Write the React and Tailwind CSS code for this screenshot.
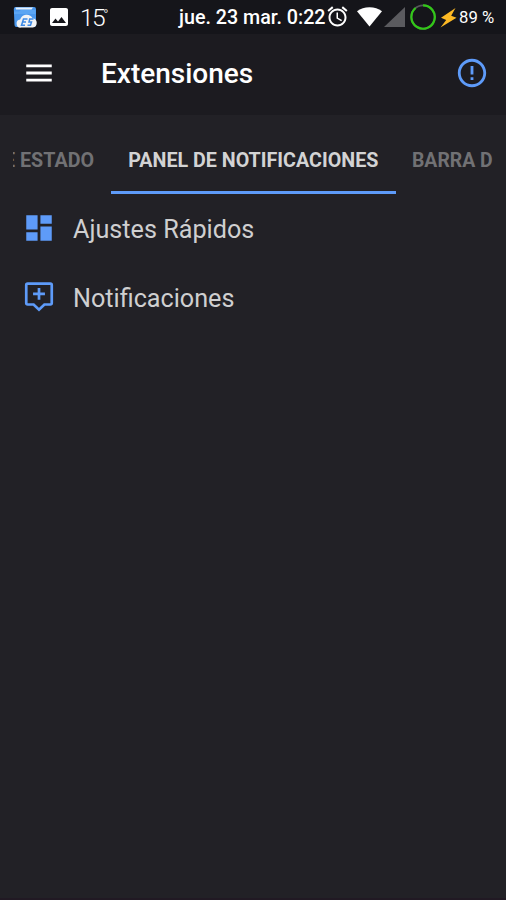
import React from "react";

function StatusBar() {
  return (
    <div className="flex h-[34px] items-center bg-[#15151a] text-white">
      <svg className="ml-[13px] shrink-0" width="24" height="24" viewBox="0 0 24 24">
        <path d="M3 2h18a2 2 0 0 1 2 2v16a2 2 0 0 1-2 2H3.500a2 2 0 0 1-2-2L.8 4a2 2 0 0 1 2.200-2z" fill="#4a97ec" />
        <path d="M2.500 2.500h17.500l-1.500 2H3z" fill="#e8f1fb" />
        <path d="M1 6.500h5l2-1.500h14.500v4H1z" fill="#5ba5f3" />
        <path d="M8 22.600a4 4 0 0 1-.8-8 6.700 6.700 0 0 1 12.400-1.300 4.700 4.700 0 0 1 .2 9.300z" fill="#f1f3f6" />
        <g fill="none" stroke="#3d8ae6" strokeWidth="1.500">
          <path d="M14.500 14h-4l-2 6.300h3.500M9.500 17h3.500M20.500 14h-3.800l-.7 3h2.500l-1 3.300h-3" />
        </g>
      </svg>
      <svg className="ml-[13px] shrink-0" width="18" height="18" viewBox="3 3 18 18">
        <path
          d="M21 19V5c0-1.100-.9-2-2-2H5c-1.100 0-2 .9-2 2v14c0 1.100.9 2 2 2h14c1.100 0 2-.9 2-2zM8.500 13.500l2.500 3.010L14.500 12l4.500 6H5l3.500-4.500z"
          fill="#fff"
        />
      </svg>
      <span className="mt-[2px] ml-[12px] flex w-[25px] shrink-0 whitespace-nowrap text-[24.500px] font-light leading-[34px] tracking-[-1.500px]">
        15<span className="-mt-[3px] -ml-[1px] text-[14px]">°</span>
      </span>
      <span className="mt-[2px] ml-[74px] w-[147px] shrink-0 whitespace-nowrap text-[19.700px] font-medium leading-[34px]">
        jue. 23 mar. 0:22
      </span>
      <svg className="shrink-0" width="23" height="22" viewBox="1 1.500 22 22">
        <path
          d="M22 5.720l-4.600-3.860-1.290 1.530 4.600 3.860L22 5.720zM7.880 3.390L6.600 1.860 2 5.710l1.290 1.530 4.590-3.850zM12.500 8H11v6l4.750 2.850.75-1.230-4-2.370V8zM12 4c-4.970 0-9 4.030-9 9s4.020 9 9 9c4.970 0 9-4.030 9-9s-4.030-9-9-9zm0 16c-3.870 0-7-3.130-7-7s3.130-7 7-7 7 3.130 7 7-3.130 7-7 7z"
          fill="#fff"
        />
      </svg>
      <svg className="ml-[8px] shrink-0" width="25" height="20" viewBox="0 0 25 20">
        <path d="M12.500 19.500L0 4.200Q5.300.2 12.500.2T25 4.200z" fill="#fff" />
      </svg>
      <svg className="ml-[2px] shrink-0" width="21" height="20" viewBox="0 0 21 20">
        <path d="M21 0v20H0z" fill="#5b5b5f" />
      </svg>
      <svg className="ml-[5px] shrink-0" width="26" height="26" viewBox="0 0 26 26">
        <circle cx="13" cy="13" r="11.700" fill="none" stroke="#55555a" strokeWidth="1.800" />
        <path d="M13 1.300A11.700 11.700 0 1 1 5.600 4" fill="none" stroke="#32c718" strokeWidth="2.200" />
      </svg>
      <svg className="ml-[4px] mt-[2px] shrink-0" width="18" height="20" viewBox="0 0 18 20">
        <path d="M15.500 0L1 9.800l5.200 2.200L.5 19.500 16.500 9.700l-5.300-2z" fill="#fdb924" />
      </svg>
      <span className="mt-[2px] ml-[1px] whitespace-nowrap text-[16.700px] leading-[34px]">89 %</span>
    </div>
  );
}

function Header() {
  return (
    <header className="flex h-[81px] items-center bg-[#1c1b20] pb-[4px] pl-[22px] pr-[17px]">
      <svg width="34" height="34" viewBox="0 0 24 24" fill="#fff">
        <path d="M3 18h18v-2H3v2zm0-5h18v-2H3v2zm0-7v2h18V6H3z" />
      </svg>
      <h1 className="mt-[3px] ml-[45px] text-[28px] font-medium leading-[34px] text-white">Extensiones</h1>
      <svg className="ml-auto" width="34" height="34" viewBox="0 0 24 24" fill="#5e9bf9">
        <path d="M11 15h2v2h-2v-2zm0-8h2v6h-2V7zm.99-5C6.470 2 2 6.480 2 12s4.470 10 9.990 10C17.520 22 22 17.520 22 12S17.520 2 11.990 2zM12 20c-4.420 0-8-3.580-8-8s3.580-8 8-8 8 3.580 8 8-3.580 8-8 8z" />
      </svg>
    </header>
  );
}

function Tabs() {
  return (
    <nav className="mr-[13px] ml-[13px] flex h-[79px] overflow-hidden whitespace-nowrap text-[19.700px] font-bold leading-[91px]">
      <div className="flex w-[98px] shrink-0 justify-end overflow-hidden pr-[17px] text-[#717174]">E ESTADO</div>
      <div className="w-[284.500px] shrink-0 border-b-[3px] border-[#5e9bf9] text-center text-[#d3d3d4]">
        PANEL DE NOTIFICACIONES
      </div>
      <div className="shrink-0 pl-[16.500px] text-[19.400px] text-[#717174]">BARRA D</div>
    </nav>
  );
}

const items = [
  {
    label: "Ajustes Rápidos",
    icon: <path d="M13 3v6h8V3m-8 18h8V11h-8M3 21h8v-6H3m0-2h8V3H3v10z" fill="#5e9bf9" />,
  },
  {
    label: "Notificaciones",
    icon: (
      <g fill="none" stroke="#5e9bf9" strokeWidth="1.900">
        <path d="M4 2.600h16q1 0 1 1v12.700q0 1-1 1h-4.200L12 20.900l-3.800-3.600H4q-1 0-1-1V3.600q0-1 1-1z" />
        <path d="M12 5.600v8.400M7.800 9.800h8.400" />
      </g>
    ),
  },
];

function App() {
  return (
    <div className="h-[900px] w-[506px] overflow-hidden border-b-2 border-[#211923] bg-[#222126] font-[Roboto,sans-serif]">
      <StatusBar />
      <Header />
      <Tabs />
      <ul>
        {items.map((item) => (
          <li key={item.label} className="flex h-[69px] items-center pl-[22px]">
            <svg className="-mt-[2px]" width="34" height="34" viewBox="0 0 24 24">
              {item.icon}
            </svg>
            <span className="mt-[2px] ml-[17px] text-[25.200px] text-[#cfcfd0]">{item.label}</span>
          </li>
        ))}
      </ul>
    </div>
  );
}

export default App;
